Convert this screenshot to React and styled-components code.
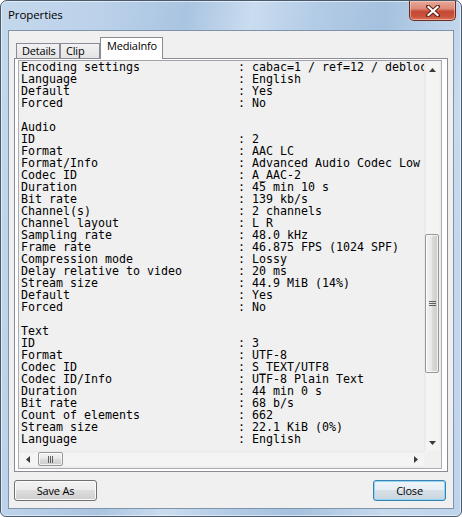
import React from 'react';
import styled, {createGlobalStyle} from 'styled-components';

const GlobalStyle = createGlobalStyle`
	html, body {
		margin: 0;
		padding: 0;
		overflow: hidden;
		background: #ffffff;
	}
`;

const uiFont = `"Open Sans", "Noto Sans", "Liberation Sans", sans-serif`;

const Window = styled.div`
	width: 462px;
	height: 517px;
	box-sizing: border-box;
	border: 1px solid #4a5b6e;
	border-radius: 7px 7px 6px 6px;
	display: flex;
	flex-direction: column;
	font-family: ${uiFont};
	color: #000;
	background: linear-gradient(100deg, #c4d8ec 0%, #bcd2ea 18%, #a9c4e1 34%, #cadcef 46%, #b2cbe6 58%, #a5c1df 70%, #c7daee 86%, #bed4eb 100%);
	box-shadow: inset 0 0 0 1px rgba(255, 255, 255, 0.55);
`;

const TitleBar = styled.div`
	height: 29px;
	display: flex;
	align-items: flex-start;
	justify-content: space-between;
	padding-left: 7px;
`;

const Title = styled.span`
	margin-top: 6px;
	font-size: 11.5px;
	line-height: 16px;
	letter-spacing: -0.1px;
`;

const CloseButton = styled.div`
	width: 47px;
	height: 20px;
	margin-right: 5px;
	box-sizing: border-box;
	border: 1px solid #6b2c24;
	border-top: none;
	border-radius: 0 0 5px 5px;
	display: flex;
	align-items: center;
	justify-content: center;
	background: linear-gradient(#e7a898 0%, #dc8a77 40%, #c64a36 55%, #c9513b 80%, #d9735a 100%);
	box-shadow: inset 0 0 0 1px rgba(255, 220, 210, 0.5);
`;

const Client = styled.div`
	flex: 1;
	margin: 0 7px 7px 7px;
	border: 1px solid #7f93aa;
	background: #f0f0f0;
	display: flex;
	flex-direction: column;
	padding: 6px 5px 7px 5px;
	min-height: 0;
`;

const TabStrip = styled.div`
	height: 22px;
	display: flex;
	align-items: flex-end;
	padding-left: 2px;
	margin-bottom: -1px;
`;

const Tab = styled.div`
	position: relative;
	box-sizing: border-box;
	width: ${p => p.$width}px;
	height: ${p => p.$active ? 22 : 15}px;
	margin-bottom: ${p => p.$active ? 0 : 1}px;
	border: 1px solid #898c95;
	border-bottom: none;
	padding-left: ${p => p.$active ? 6 : 5}px;
	padding-top: ${p => p.$active ? 1 : 0}px;
	font-size: 11px;
	line-height: 13px;
	letter-spacing: -0.2px;
	background: ${p => p.$active ? '#ffffff' : 'linear-gradient(#f2f2f2, #e4e4e4)'};
	z-index: ${p => p.$active ? 1 : 0};
`;

const Panel = styled.div`
	flex: 1;
	min-height: 0;
	border: 1px solid #898c95;
	background: #ffffff;
	padding: 1px 5px 2px 3px;
	display: flex;
`;

const TextBox = styled.div`
	flex: 1;
	min-width: 0;
	border: 1px solid #abadb3;
	border-top-color: #a0a3aa;
	background: #f0f0f0;
	display: grid;
	grid-template-columns: 1fr 17px;
	grid-template-rows: 1fr 17px;
`;

const Content = styled.div`
	overflow: hidden;
	padding-left: 2px;
	font-family: "DejaVu Sans Mono", "Liberation Mono", monospace;
	font-size: 11.63px;
	line-height: 12px;
	color: #000;
`;

const Line = styled.div`
	display: flex;
	height: 12px;
	white-space: pre;
`;

const Key = styled.span`
	flex: 0 0 217px;
`;

const Value = styled.span`
	white-space: pre;
`;

const VScroll = styled.div`
	display: flex;
	flex-direction: column;
	background: linear-gradient(90deg, #e6e6e6 0%, #f4f4f4 15%, #f4f4f4 85%, #e9e9e9 100%);
`;

const HScroll = styled.div`
	display: flex;
	background: linear-gradient(#e6e6e6 0%, #f4f4f4 15%, #f4f4f4 85%, #e9e9e9 100%);
`;

const Corner = styled.div`
	background: #f0f0f0;
`;

const Arrow = styled.div`
	flex: 0 0 17px;
	height: 17px;
	width: 17px;
	display: flex;
	align-items: center;
	justify-content: center;
`;

const Track = styled.div`
	flex: 1;
	display: flex;
	flex-direction: ${p => p.$vertical ? 'column' : 'row'};
`;

const Thumb = styled.div`
	box-sizing: border-box;
	border: 1px solid #979797;
	border-radius: 2px;
	display: flex;
	align-items: center;
	justify-content: center;
	${p => p.$vertical ? `
		width: 14px;
		height: ${p.$size}px;
		margin: ${p.$offset}px 0 0 1px;
		background: linear-gradient(90deg, #f3f3f3 0%, #e9e9e9 45%, #d9d9d9 55%, #cdcdcd 100%);
	` : `
		height: 14px;
		width: ${p.$size}px;
		margin: 1px 0 0 ${p.$offset}px;
		background: linear-gradient(#f3f3f3 0%, #e9e9e9 45%, #d9d9d9 55%, #cdcdcd 100%);
	`}
	box-shadow: inset 0 0 0 1px rgba(255, 255, 255, 0.7);
`;

const ButtonRow = styled.div`
	display: flex;
	justify-content: space-between;
	margin-top: 8px;
`;

const Button = styled.div`
	box-sizing: border-box;
	width: ${p => p.$width}px;
	height: 21px;
	margin-right: ${p => p.$default ? 2 : 0}px;
	border: 1px solid ${p => p.$default ? '#3c7fb1' : '#707070'};
	border-radius: 3px;
	display: flex;
	align-items: center;
	justify-content: center;
	font-size: 11px;
	letter-spacing: -0.2px;
	padding-bottom: 1px;
	background: ${p => p.$default
		? 'linear-gradient(#eef4f8 0%, #e6eef4 49%, #d6e0e8 50%, #c9d5df 100%)'
		: 'linear-gradient(#f2f2f2 0%, #ebebeb 49%, #dddddd 50%, #cfcfcf 100%)'};
	box-shadow: inset 0 0 0 1px ${p => p.$default ? '#8fd9f5' : '#fbfbfb'};
`;

const Tri = ({dir}) => {
	const pts = {
		up: '0,4 3.5,0 7,4',
		down: '0,0 7,0 3.5,4',
		left: '4,0 4,7 0,3.5',
		right: '0,0 0,7 4,3.5',
	}[dir];
	const horizontal = dir === 'left' || dir === 'right';
	return (
		<svg width={horizontal ? 4 : 7} height={horizontal ? 7 : 4} viewBox={horizontal ? '0 0 4 7' : '0 0 7 4'}>
			<polygon points={pts} fill="#3b3b3b"/>
		</svg>
	);
};

// three grip lines in the middle of a scrollbar thumb
const Grip = ({vertical}) => (
	<svg width="7" height="7" viewBox="0 0 7 7">
		{[1, 3, 5].map(i => vertical
			? <line key={i} x1="0" y1={i + 0.5} x2="7" y2={i + 0.5} stroke="#5e5e5e" strokeWidth="1"/>
			: <line key={i} x1={i + 0.5} y1="0" x2={i + 0.5} y2="7" stroke="#5e5e5e" strokeWidth="1"/>
		)}
	</svg>
);

const CloseGlyph = () => (
	<svg width="14" height="12" viewBox="0 0 14 12">
		<path d="M2 1.5 L12 10.5 M12 1.5 L2 10.5" stroke="#5a1d16" strokeWidth="4" strokeLinecap="round"/>
		<path d="M2.5 2 L11.5 10 M11.5 2 L2.5 10" stroke="#ffffff" strokeWidth="2.2" strokeLinecap="square"/>
	</svg>
);

const lines = [
	['Encoding settings', 'cabac=1 / ref=12 / deblock=1:-3:-3 / analyse=0x3:0x133 / me=umh / subme=10'],
	['Language', 'English'],
	['Default', 'Yes'],
	['Forced', 'No'],
	[''],
	['Audio'],
	['ID', '2'],
	['Format', 'AAC LC'],
	['Format/Info', 'Advanced Audio Codec Low Complexity'],
	['Codec ID', 'A_AAC-2'],
	['Duration', '45 min 10 s'],
	['Bit rate', '139 kb/s'],
	['Channel(s)', '2 channels'],
	['Channel layout', 'L R'],
	['Sampling rate', '48.0 kHz'],
	['Frame rate', '46.875 FPS (1024 SPF)'],
	['Compression mode', 'Lossy'],
	['Delay relative to video', '20 ms'],
	['Stream size', '44.9 MiB (14%)'],
	['Default', 'Yes'],
	['Forced', 'No'],
	[''],
	['Text'],
	['ID', '3'],
	['Format', 'UTF-8'],
	['Codec ID', 'S_TEXT/UTF8'],
	['Codec ID/Info', 'UTF-8 Plain Text'],
	['Duration', '44 min 0 s'],
	['Bit rate', '68 b/s'],
	['Count of elements', '662'],
	['Stream size', '22.1 KiB (0%)'],
	['Language', 'English'],
	[''],
];

const tabs = [
	{name: 'Details', width: 44},
	{name: 'Clip', width: 40},
	{name: 'MediaInfo', width: 63, active: true},
];

export default function App() {
	return (
		<>
			<GlobalStyle/>
			<Window>
				<TitleBar>
					<Title>Properties</Title>
					<CloseButton><CloseGlyph/></CloseButton>
				</TitleBar>
				<Client>
					<TabStrip>
						{tabs.map(t => (
							<Tab key={t.name} $width={t.width} $active={t.active}>{t.name}</Tab>
						))}
					</TabStrip>
					<Panel>
						<TextBox>
							<Content>
								{lines.map(([key, value], i) => (
									<Line key={i}>
										<Key>{key || ' '}</Key>
										{value !== undefined && <Value>: {value}</Value>}
									</Line>
								))}
							</Content>
							<VScroll>
								<Arrow><Tri dir="up"/></Arrow>
								<Track $vertical>
									<Thumb $vertical $size={139} $offset={156}><Grip vertical/></Thumb>
								</Track>
								<Arrow><Tri dir="down"/></Arrow>
							</VScroll>
							<HScroll>
								<Arrow><Tri dir="left"/></Arrow>
								<Track>
									<Thumb $size={25} $offset={2}><Grip/></Thumb>
								</Track>
								<Arrow><Tri dir="right"/></Arrow>
							</HScroll>
							<Corner/>
						</TextBox>
					</Panel>
					<ButtonRow>
						<Button $width={83}>Save As</Button>
						<Button $width={73} $default>Close</Button>
					</ButtonRow>
				</Client>
			</Window>
		</>
	);
}
